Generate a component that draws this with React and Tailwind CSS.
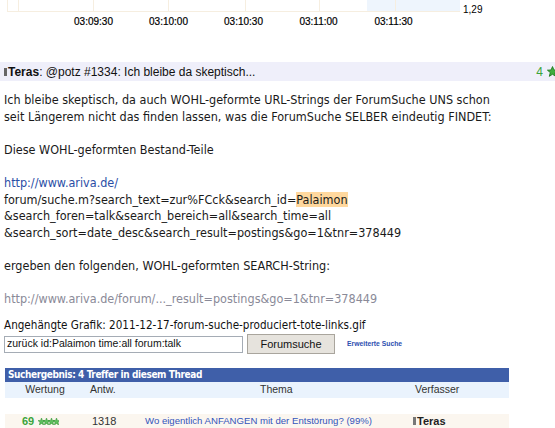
import React from 'react';

const Star = ({ size = 10, fill = '#3fae3f', stroke = '#1e7a1e' }) => (
    <svg width={size} height={size} viewBox="0 0 10 10">
        <polygon
            points="5,0.5 6.3,3.6 9.6,3.8 7,6 7.9,9.4 5,7.5 2.1,9.4 3,6 0.4,3.8 3.7,3.6"
            fill={fill}
            stroke={stroke}
            strokeWidth="0.8"
        />
    </svg>
);

const TinyStars = () => (
    <svg width="21" height="7" viewBox="0 0 21 7">
        {[0, 1, 2, 3].map((i) => (
            <polygon
                key={i}
                transform={`translate(${i * 5},0)`}
                points="3.5,0 4.4,2.4 7,2.6 5,4.2 5.6,7 3.5,5.5 1.4,7 2,4.2 0,2.6 2.6,2.4"
                fill="#5cbf5c"
                stroke="#2f8f2f"
                strokeWidth="0.5"
            />
        ))}
    </svg>
);

const ChartStrip = () => {
    const lines = [18, 93, 168, 245, 319, 395];
    return (
        <svg width="462" height="13" viewBox="0 0 462 13" className="block">
            <rect x="367" y="0" width="93" height="11" fill="#eef5fd" />
            <line x1="7.5" y1="0" x2="7.5" y2="11.5" stroke="#f6eee0" />
            {lines.map((x) => (
                <line key={x} x1={x + 0.5} y1="0" x2={x + 0.5} y2="11" stroke="#f6eee0" />
            ))}
            <line x1="7" y1="11.5" x2="460" y2="11.5" stroke="#f6eee0" />
        </svg>
    );
};

const body = [
    'Ich bleibe skeptisch, da auch WOHL-geformte URL-Strings der ForumSuche UNS schon',
    'seit Längerem nicht das finden lassen, was die ForumSuche SELBER eindeutig FINDET:',
];

const App = () => {
    return (
        <div className="w-[555px] h-[428px] overflow-hidden bg-white relative font-['Liberation_Sans',Arial,sans-serif]">
            {/* chart remainder */}
            <div className="flex h-[13px]">
                <ChartStrip />
                <span className="ml-[1px] mt-[5px] text-[10px] leading-[10px] text-black h-[10px]">1,29</span>
            </div>
            <div className="flex pl-[56px] h-[17px] items-center text-[10px] text-black">
                {['03:09:30', '03:10:00', '03:10:30', '03:11:00', '03:11:30'].map((t) => (
                    <div key={t} className="w-[75px] text-center [-webkit-text-stroke:0.2px_#000]">{t}</div>
                ))}
            </div>

            {/* posting header */}
            <div className="mt-[32px] h-[19px] bg-[#efeffa] flex items-center pl-[4px] text-[12px] text-[#111] w-[560px]">
                <span className="inline-block w-[3px] h-[8px] bg-[#666] mr-[1px]" />
                <span className="font-bold">Teras</span>
                <span>: @potz #1334: Ich bleibe da skeptisch...</span>
                <span className="ml-auto text-[#3aa43a] mr-[4px]">4</span>
                <span className="mr-[2px]"><Star size={11} /></span>
            </div>

            {/* posting body */}
            <div className="mt-[11px] pl-[4px] text-[12.5px] leading-[16.6px] text-[#1a1a1a] font-['DejaVu_Sans_Condensed','DejaVu_Sans',sans-serif] whitespace-nowrap">
                {body.map((l) => (
                    <div key={l}>{l}</div>
                ))}
                <div>&nbsp;</div>
                <div>Diese WOHL-geformten Bestand-Teile</div>
                <div>&nbsp;</div>
                <div className="text-[#2a4ea6]">http://www.ariva.de/</div>
                <div>
                    forum/suche.m?search_text=zur%FCck&amp;search_id=<span className="bg-[#ffd89e]">Palaimon</span>
                </div>
                <div>&amp;search_foren=talk&amp;search_bereich=all&amp;search_time=all</div>
                <div>&amp;search_sort=date_desc&amp;search_result=postings&amp;go=1&amp;tnr=378449</div>
                <div>&nbsp;</div>
                <div>ergeben den folgenden, WOHL-geformten SEARCH-String:</div>
                <div>&nbsp;</div>
                <div className="text-[#8a8a98]">http://www.ariva.de/forum/..._result=postings&amp;go=1&amp;tnr=378449</div>
            </div>

            <div className="mt-[10px] pl-[4px] text-[11.6px] leading-[14px] text-[#111] font-['DejaVu_Sans_Condensed','DejaVu_Sans',sans-serif] whitespace-nowrap">
                Angehängte Grafik: 2011-12-17-forum-suche-produciert-tote-links.gif
            </div>

            {/* search form */}
            <div className="mt-[2px] pl-[4px] flex items-center h-[21px]">
                <div className="w-[239px] h-[17px] border border-[#a5acb5] bg-white flex items-center pl-[2px] text-[10.5px] text-[#111] whitespace-nowrap overflow-hidden">
                    zurück id:Palaimon time:all forum:talk
                </div>
                <button className="ml-[4px] w-[88px] h-[20px] bg-[#e6e3dd] border border-[#a9a59d] text-[11px] text-[#111] leading-none">
                    Forumsuche
                </button>
                <a className="ml-[12px] text-[6.8px] font-bold text-[#2e4fb0]">Erweiterte Suche</a>
            </div>

            {/* search results */}
            <div className="mt-[13px] ml-[5px] w-[504px]">
                <div className="h-[14px] bg-[#3f5fa9] text-white text-[10px] tracking-[-0.4px] font-bold leading-[14px] pl-[3px] font-['DejaVu_Sans_Condensed','DejaVu_Sans',sans-serif]">
                    Suchergebnis: 4 Treffer in diesem Thread
                </div>
                <div className="h-[16px] bg-[#eaf3fd] flex items-center text-[10.5px] text-[#333]">
                    <div className="w-[70px] text-center pl-[10px]">Wertung</div>
                    <div className="w-[50px] pl-[15px]">Antw.</div>
                    <div className="w-[255px] pl-[135px]">Thema</div>
                    <div className="pl-[35px]">Verfasser</div>
                </div>
                <div className="h-[16px]" />
                <div className="h-[15px] bg-[#fbf6ef] flex items-center text-[11px]">
                    <div className="w-[85px] flex items-center pl-[17px]">
                        <span className="text-[#3aa43a] font-bold mr-[4px]">69</span>
                        <TinyStars />
                    </div>
                    <div className="w-[55px] pl-[2px] text-[#333]">1318</div>
                    <div className="w-[268px] text-[9.6px] text-[#3355bb] whitespace-nowrap">Wo eigentlich ANFANGEN mit der Entstörung? (99%)</div>
                    <div className="flex items-center">
                        <span className="inline-block w-[3px] h-[8px] bg-[#777] mr-[1px]" />
                        <span className="font-bold text-[#222]">Teras</span>
                    </div>
                </div>
            </div>
        </div>
    );
};

export default App;
